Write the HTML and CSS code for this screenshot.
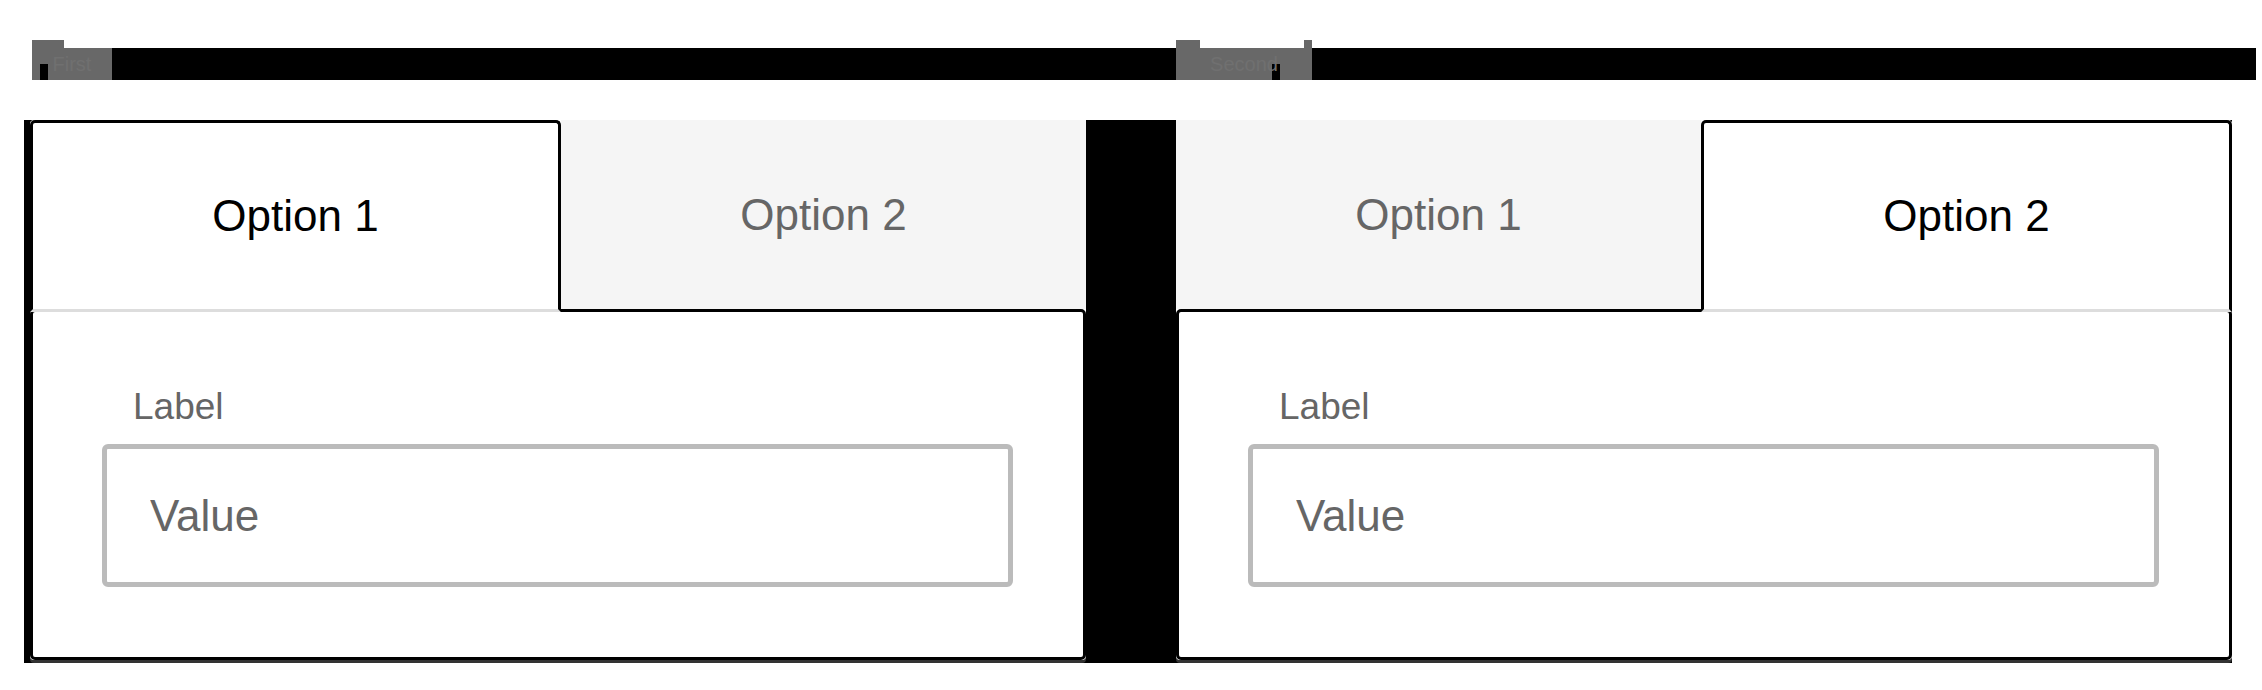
FILE: index.html
```html
<!doctype html>
<html lang="en">
  <head>
    <meta charset="UTF-8" />
    <meta name="viewport" content="width=device-width, initial-scale=1.0" />
    <title>Tabs</title>
    <link rel="stylesheet" href="styles.css">
  </head>
  <body>
    <div class="headings">
      <div class="heading">
        <span class="heading-text first">First</span>
      </div>
      <div class="heading">
        <span class="heading-text second">Second</span>
      </div>
    </div>

    <div class="panels">
      <!-- First -->
      <div class="panel">
        <div class="tabs">
          <div class="tab active">Option 1</div>
          <div class="tab">Option 2</div>
        </div>
        <div class="panel-body">
          <div class="field-label">Label</div>
          <input class="field-input" type="text" value="Value" />
        </div>
      </div>

      <!-- Second -->
      <div class="panel">
        <div class="tabs">
          <div class="tab">Option 1</div>
          <div class="tab active">Option 2</div>
        </div>
        <div class="panel-body">
          <div class="field-label">Label</div>
          <input class="field-input" type="text" value="Value" />
        </div>
      </div>
    </div>
  </body>
</html>
```

FILE: styles.css
```css
:root {
  --ink: #000;
  --muted: #666;
  --tab-bg: #f5f5f5;
  --line: #ddd;
  --input-border: #bbb;
  --heading-gray: #686868;
}

* {
  box-sizing: border-box;
}

body {
  margin: 0;
  padding: 40px 0 0;
  background: #fff;
  font-family: 'Liberation Sans', Arial, Helvetica, sans-serif;
  color: var(--ink);
}

/* Heading strip */
.headings {
  display: grid;
  grid-template-columns: 1144px 1fr;
  margin-left: 32px;
  width: 2224px;
  height: 40px;
  background: linear-gradient(#000, #000) 0 8px / 100% 32px no-repeat;
}

.heading {
  display: flex;
}

.heading-text {
  display: flex;
  align-items: center;
  justify-content: center;
  height: 40px;
  padding-top: 8px;
  white-space: nowrap;
  color: #707070;
  font-size: 20px;
}

.heading-text.first {
  width: 80px;
  background:
    linear-gradient(#fff, #fff) 32px 0 / 48px 8px no-repeat,
    linear-gradient(#000, #000) 8px 24px / 8px 16px no-repeat,
    var(--heading-gray);
}

.heading-text.second {
  width: 136px;
  background:
    linear-gradient(#fff, #fff) 24px 0 / 104px 8px no-repeat,
    linear-gradient(#000, #000) 96px 24px / 8px 16px no-repeat,
    var(--heading-gray);
}

/* Panels */
.panels {
  display: flex;
  gap: 90px;
  margin: 40px 0 0 24px;
  width: 2208px;
  padding: 0 0 3px 6px;
  background: #000;
}

.panel {
  width: 1056px;
  background: #fff;
  border-radius: 4px;
  box-shadow: 0 3px 0 #333;
}

.tabs {
  display: flex;
  align-items: flex-start;
}

.tab {
  flex: 1;
  height: 189px;
  display: flex;
  align-items: center;
  justify-content: center;
  background: var(--tab-bg);
  color: var(--muted);
  font-size: 44px;
  cursor: pointer;
}

.tab.active {
  position: relative;
  z-index: 1;
  height: 192px;
  margin-bottom: -3px;
  background: #fff;
  color: var(--ink);
  border: 3px solid var(--ink);
  border-bottom-color: var(--line);
  border-radius: 5px 5px 0 0;
}

.panel-body {
  border: 3px solid var(--ink);
  border-radius: 5px;
  background: #fff;
  padding: 73px 70px 70px 69px;
}

.field-label {
  margin: 0 0 15px 31px;
  font-size: 37px;
  line-height: 44px;
  color: var(--muted);
}

.field-input {
  display: block;
  width: 100%;
  height: 143px;
  padding: 0 43px;
  border: 5px solid var(--input-border);
  border-radius: 6px;
  font-family: inherit;
  font-size: 44px;
  color: var(--muted);
  background: #fff;
  outline: none;
}
```
